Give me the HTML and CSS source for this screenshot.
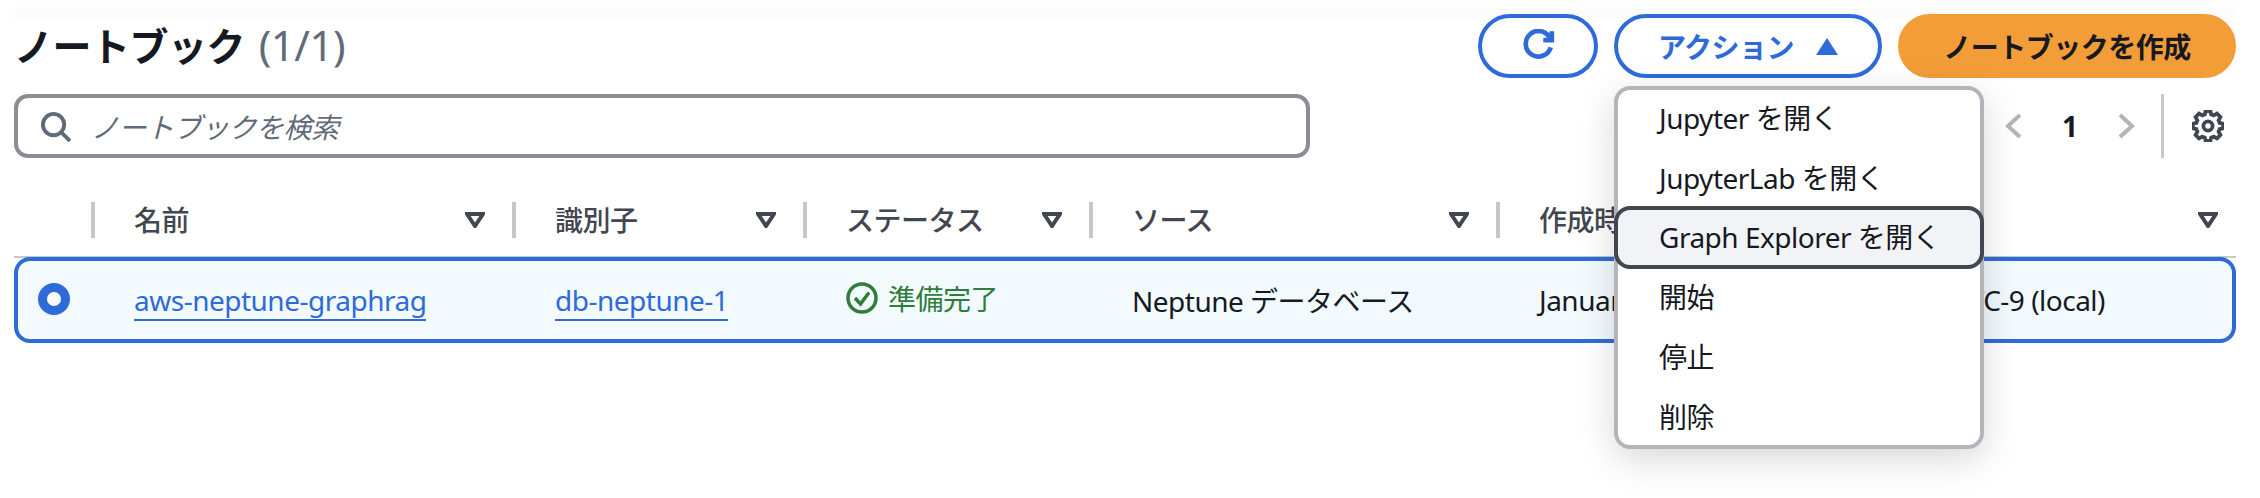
FILE: index.html
```html
<!DOCTYPE html>
<html lang="ja">
<head>
    <meta charset="UTF-8">
    <meta name="viewport" content="width=device-width, initial-scale=1.0">
    <title>ノートブック</title>
    <link rel="stylesheet" href="styles.css">
</head>
<body>
    <div class="page">
        <div class="top-edge"></div>

        <div class="heading">
            <h1>ノートブック <span class="count">(1/1)</span></h1>
            <div class="buttons">
                <button class="btn btn-refresh" aria-label="更新">
                    <svg class="icon-refresh" viewBox="0 0 16 16"><path d="M10.5 5.2h4V1"/><path d="M14 8.6A6 6 0 1 1 13.9 5"/></svg>
                </button>
                <div class="actions">
                    <button class="btn btn-actions">アクション
                        <svg class="icon-up" viewBox="0 0 22 17"><path d="M11 0l11 17H0z"/></svg>
                    </button>
                    <ul class="menu">
                        <li>Jupyter を開く</li>
                        <li>JupyterLab を開く</li>
                        <li class="active">Graph Explorer を開く</li>
                        <li>開始</li>
                        <li>停止</li>
                        <li>削除</li>
                    </ul>
                </div>
                <button class="btn btn-primary">ノートブックを作成</button>
            </div>
        </div>

        <div class="tools">
            <div class="search">
                <svg class="icon-search" viewBox="0 0 16 16"><circle cx="7" cy="7" r="5.5"/><path d="M11 11l4.5 4.5"/></svg>
                <span class="placeholder">ノートブックを検索</span>
            </div>
            <div class="pager">
                <svg class="chevron" viewBox="0 0 17 26"><path d="M15 2L3 13l12 11"/></svg>
                <span class="page-num">1</span>
                <svg class="chevron" viewBox="0 0 17 26"><path d="M2 2l12 11L2 24"/></svg>
                <span class="pager-sep"></span>
                <svg class="icon-gear" viewBox="0 0 16 16"><path d="M13.3 5.2l.9-1.7-1.7-1.7-1.7.9c-.4-.2-.8-.4-1.2-.5L9.2.5H6.8l-.4 1.7c-.4.1-.8.3-1.2.5l-1.7-.9-1.7 1.7.9 1.7c-.2.4-.4.8-.5 1.2L.5 6.800v2.400l1.700.4c.1.4.3.8.5 1.200l-.9 1.700 1.700 1.700 1.700-.9c.4.2.8.4 1.200.5l.4 1.700h2.400l.4-1.700c.4-.1.8-.3 1.200-.5l1.700.9 1.700-1.700-.9-1.700c.2-.4.4-.8.5-1.200l1.700-.4V6.800l-1.700-.4c-.1-.4-.3-.8-.5-1.200z"/><circle cx="8" cy="8" r="2.300"/></svg>
            </div>
        </div>

        <div class="table-head">
            <div class="th-select"></div>
            <div class="th"><span>名前</span><svg class="icon-filter" viewBox="0 0 20 16"><path d="M2 2h16l-8 12z"/></svg></div>
            <div class="th"><span>識別子</span><svg class="icon-filter" viewBox="0 0 20 16"><path d="M2 2h16l-8 12z"/></svg></div>
            <div class="th"><span>ステータス</span><svg class="icon-filter" viewBox="0 0 20 16"><path d="M2 2h16l-8 12z"/></svg></div>
            <div class="th"><span>ソース</span><svg class="icon-filter" viewBox="0 0 20 16"><path d="M2 2h16l-8 12z"/></svg></div>
            <div class="th th-last"><span>作成時間</span><svg class="icon-filter" viewBox="0 0 20 16"><path d="M2 2h16l-8 12z"/></svg></div>
        </div>

        <div class="row">
            <div class="td-select"><span class="radio"></span></div>
            <div class="td"><a class="link" href="#">aws-neptune-graphrag</a></div>
            <div class="td"><a class="link" href="#">db-neptune-1</a></div>
            <div class="td status">
                <svg class="icon-ok" viewBox="0 0 32 32"><circle cx="16" cy="16" r="14"/><path d="M9 16l5.500 6L23 10.500"/></svg>
                準備完了
            </div>
            <div class="td">Neptune データベース</div>
            <div class="td td-created"><span>January 15, 2025</span><span>UTC-9 (local)</span></div>
        </div>
    </div>
</body>
</html>
```

FILE: styles.css
```css
* {
    box-sizing: border-box;
}

body {
    margin: 0;
    background-color: #fff;
    color: #16191f;
    font-family: "Noto Sans", "Noto Sans CJK JP", sans-serif;
    font-size: 28px;
    overflow: hidden;
}

.page {
    width: 2260px;
    height: 498px;
    padding: 0 24px 0 14px;
}

.top-edge {
    height: 0;
    box-shadow: 0 0 12px 2px rgba(0, 0, 0, 0.06);
}

/* heading */
.heading {
    display: flex;
    justify-content: space-between;
    margin-top: 14px;
    height: 64px;
}

h1 {
    margin: 0;
    font-size: 39px;
    font-weight: 700;
    line-height: 62px;
    letter-spacing: -0.5px;
}

.count {
    margin-left: 4px;
    color: #5f6b7a;
    font-size: 42px;
    font-weight: 400;
}

.buttons {
    display: flex;
    gap: 16px;
}

.actions {
    position: relative;
}

.btn {
    display: flex;
    align-items: center;
    justify-content: center;
    height: 64px;
    border: 4px solid #2f6bd8;
    border-radius: 32px;
    background-color: #fff;
    color: #2f6bd8;
    font-family: inherit;
    font-size: 28px;
    font-weight: 700;
    letter-spacing: -0.5px;
}

.btn-refresh {
    width: 120px;
}

.icon-refresh {
    width: 34px;
    height: 34px;
    fill: none;
    stroke: #2f6bd8;
    stroke-width: 2.2;
}

.btn-actions {
    width: 268px;
    gap: 22px;
}

.icon-up {
    width: 22px;
    height: 17px;
    fill: #2f6bd8;
}

.btn-primary {
    width: 338px;
    border-color: #f29d38;
    background-color: #f29d38;
    color: #16191f;
}

/* dropdown */
.menu {
    position: absolute;
    top: 72px;
    left: 0;
    z-index: 5;
    width: 370px;
    height: 363px;
    margin: 0;
    padding: 0;
    list-style: none;
    background-color: #fff;
    border: 4px solid #b4b4bb;
    border-radius: 16px;
    box-shadow: 0 10px 36px rgba(0, 0, 0, 0.16);
}

.menu li {
    display: flex;
    align-items: center;
    height: 56px;
    margin-bottom: 4px;
    padding: 0 0 3px 41px;
    letter-spacing: -0.5px;
}

.menu li.active {
    height: 63px;
    margin: -4px -4px 0;
    background-color: #f2f3f7;
    border: 4px solid #424650;
    border-radius: 16px;
    position: relative;
}

/* search row */
.tools {
    display: flex;
    justify-content: space-between;
    margin-top: 16px;
    height: 64px;
}

.search {
    display: flex;
    align-items: center;
    width: 1296px;
    padding-left: 22px;
    border: 4px solid #8c8c94;
    border-radius: 14px;
}

.icon-search {
    width: 31px;
    height: 31px;
    fill: none;
    stroke: #5f6b7a;
    stroke-width: 2;
}

.placeholder {
    margin-left: 20px;
    color: #5f6b7a;
    font-style: italic;
    letter-spacing: -0.5px;
}

.pager {
    display: flex;
    align-items: center;
    padding-right: 12px;
}

.chevron {
    width: 17px;
    height: 26px;
    fill: none;
    stroke: #b4b4bb;
    stroke-width: 4;
}

.page-num {
    width: 96px;
    text-align: center;
    font-weight: 700;
}

.pager-sep {
    width: 3px;
    height: 64px;
    margin: 0 28px 0 26px;
    background-color: #c6c6cd;
}

.icon-gear {
    width: 32px;
    height: 32px;
    fill: none;
    stroke: #424650;
    stroke-width: 1.900;
}

/* table */
.table-head {
    display: grid;
    grid-template-columns: 77px 421px 291px 286px 407px 740px;
    height: 56px;
    margin-top: 44px;
    border-bottom: 2px solid #c6c6cd;
}

.th {
    display: flex;
    align-items: center;
    justify-content: space-between;
    height: 36px;
    padding: 0 27px 0 39px;
    border-left: 4px solid #c6c6cd;
    color: #424650;
    font-weight: 500;
    letter-spacing: -0.5px;
}

.th span {
    padding-bottom: 2px;
}

.th-last {
    padding-right: 18px;
}

.icon-filter {
    width: 20px;
    height: 16px;
    fill: none;
    stroke: #424650;
    stroke-width: 4;
}

.row {
    display: grid;
    grid-template-columns: 73px 421px 291px 286px 407px 736px;
    align-items: center;
    height: 86px;
    margin-top: -1px;
    background-color: #f2fafe;
    border: 4px solid #2f6bd8;
    border-radius: 16px;
}

.td-select {
    padding-left: 20px;
    display: flex;
    padding-bottom: 2px;
}

.radio {
    width: 32px;
    height: 32px;
    border: 9px solid #2f6bd8;
    border-radius: 50%;
    background-color: #fff;
}

.td {
    padding-left: 43px;
    letter-spacing: -0.5px;
}

.link {
    color: #2f6bd8;
    text-decoration: none;
    border-bottom: 2px solid #2f6bd8;
}

.status {
    display: flex;
    align-items: center;
    gap: 10px;
    padding-bottom: 4px;
    color: #2e7d3a;
}

.icon-ok {
    width: 32px;
    height: 32px;
    fill: none;
    stroke: #2e7d3a;
    stroke-width: 3.500;
}

.td-created {
    display: flex;
    justify-content: space-between;
    padding-right: 127px;
}
```
